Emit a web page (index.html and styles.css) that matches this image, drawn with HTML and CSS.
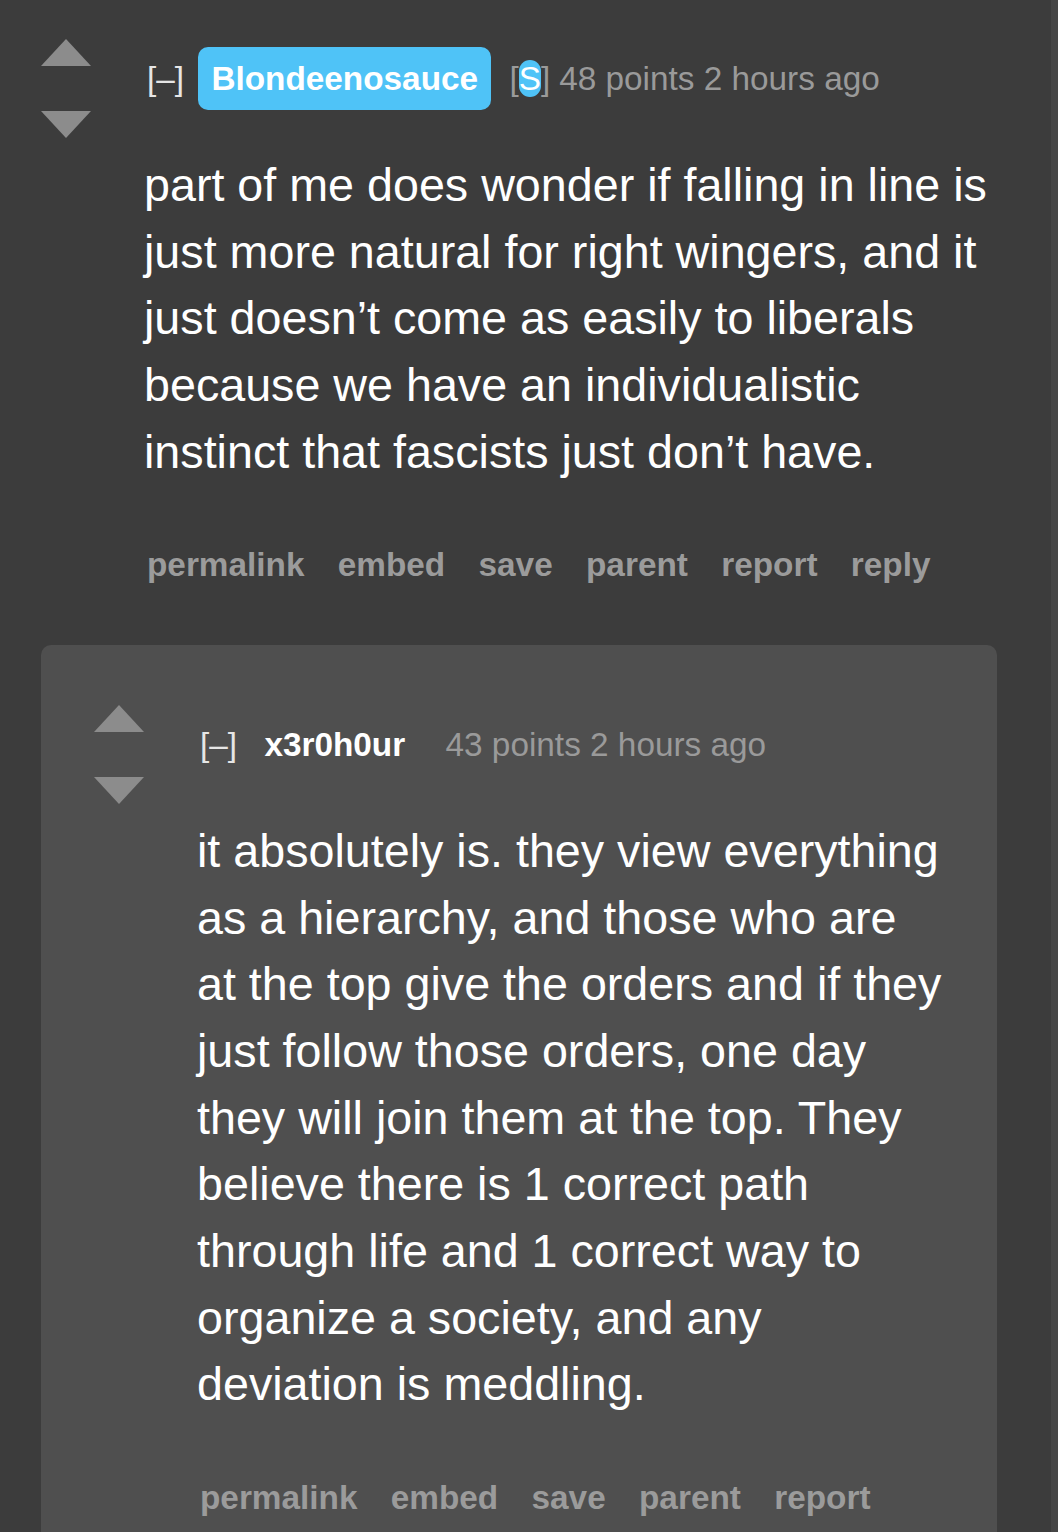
FILE: index.html
```html
<!DOCTYPE html>
<html>
<head lang="en">
	<meta charset="UTF-8">
	<title>comments</title>
	<link rel="stylesheet" href="styles.css">
</head>
<body>

<div class="listing">
	<div class="comment">
		<svg class="votes" width="50" height="99" viewBox="0 0 50 99">
			<polygon points="0,27 25,0 50,27"/>
			<polygon points="0,72 50,72 25,99"/>
		</svg>
		<div class="entry">
			<p class="tagline">
				<span class="collapse">[–]</span><a class="author submitter">Blondeenosauce</a><span class="flair">[<span class="mark">S</span>]</span><span class="score">48 points 2 hours ago</span>
			</p>
			<div class="body">
				<p>part of me does wonder if falling in line is just more natural for right wingers, and it just doesn’t come as easily to liberals because we have an individualistic instinct that fascists just don’t have.</p>
			</div>
			<ul class="buttons">
				<li>permalink</li>
				<li>embed</li>
				<li>save</li>
				<li>parent</li>
				<li>report</li>
				<li>reply</li>
			</ul>
		</div>
	</div>

	<div class="child">
		<div class="comment">
			<svg class="votes" width="50" height="99" viewBox="0 0 50 99">
				<polygon points="0,27 25,0 50,27"/>
				<polygon points="0,72 50,72 25,99"/>
			</svg>
			<div class="entry">
				<p class="tagline">
					<span class="collapse">[–]</span><a class="author">x3r0h0ur</a><span class="score">43 points 2 hours ago</span>
				</p>
				<div class="body">
					<p>it absolutely is. they view everything as a hierarchy, and those who are at the top give the orders and if they just follow those orders, one day they will join them at the top. They believe there is 1 correct path through life and 1 correct way to organize a society, and any deviation is meddling.</p>
				</div>
				<ul class="buttons">
					<li>permalink</li>
					<li>embed</li>
					<li>save</li>
					<li>parent</li>
					<li>report</li>
				</ul>
			</div>
		</div>
	</div>
</div>

</body>
</html>
```

FILE: styles.css
```css
* {
	box-sizing: border-box;
	margin: 0;
	padding: 0;
}

body {
	background: #3c3c3c;
	border-right: 7px solid #464646;
	font-family: "Liberation Sans", Arial, sans-serif;
	color: #fff;
	min-height: 1532px;
	overflow: hidden;
}

.listing {
	width: 997px;
	padding: 39px 0 0 41px;
}

.comment {
	display: flex;
	align-items: flex-start;
}

.votes {
	flex: 0 0 50px;
	fill: #8c8c8c;
}

.entry {
	flex: 1 1 auto;
	margin-left: 53px;
	padding-top: 8px;
}

.tagline {
	font-size: 33.333px;
	line-height: 64px;
	white-space: nowrap;
	padding-left: 3px;
}

.collapse {
	color: #e6e6e6;
}

.author {
	font-weight: bold;
	color: #fff;
	padding: 13.333px;
	margin: 0 18px 0 14px;
	border-radius: 10px;
}

.author.submitter {
	background: #4fc3f7;
}

.flair {
	color: #9a9a9a;
}

.flair .mark {
	color: #fff;
	background: #4fc3f7;
	border-radius: 11px;
}

.score {
	color: #9a9a9a;
	margin-left: 9px;
}

.body {
	margin-top: 41px;
	font-size: 46.667px;
	line-height: 66.667px;
}

.buttons {
	list-style: none;
	display: flex;
	gap: 33.333px;
	margin-top: 47px;
	padding-left: 3px;
	font-size: 33.333px;
	line-height: 66.667px;
	font-weight: bold;
	color: #9b9b9b;
}

.child {
	margin-top: 46px;
	background: #4f4f4f;
	border-radius: 10px;
	padding: 60px 53px 60px 53px;
}
```
